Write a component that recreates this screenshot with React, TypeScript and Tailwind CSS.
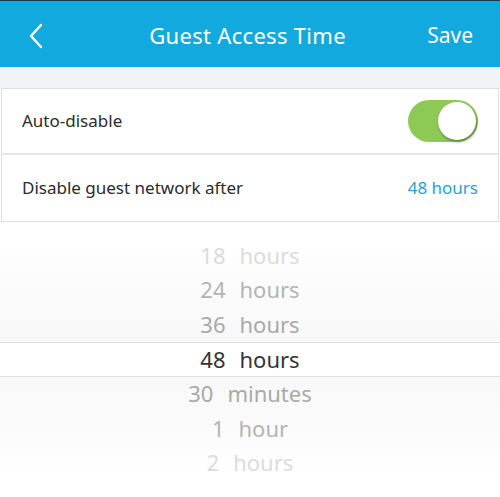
const items = [
  { n: '18', u: 'hours', c: 'text-[#dcdcdc]' },
  { n: '24', u: 'hours', c: 'text-[#b4b4b4]' },
  { n: '36', u: 'hours', c: 'text-[#a9a9a9]' },
  { n: '48', u: 'hours', c: 'text-[#333333]', sel: true },
  { n: '30', u: 'minutes', c: 'text-[#a9a9a9]' },
  { n: '1', u: 'hour', c: 'text-[#b4b4b4]' },
  { n: '2', u: 'hours', c: 'text-[#dcdcdc]' },
];

export default function App() {
  return (
    <div className="h-[497px] w-[500px] overflow-hidden bg-white font-['Noto_Sans',sans-serif]">
      {/* Header */}
      <div className="border-t border-[#1b3a48] bg-[#12aade]">
        <div className="flex h-[66px] items-center px-6 pt-[3px] text-white">
          <svg width="16" height="26" viewBox="0 0 16 26" className="ml-1">
            <path d="M13 2 L3 13 L13 24" fill="none" stroke="white" strokeWidth="2.4" strokeLinecap="round" strokeLinejoin="round" />
          </svg>
          <div className="flex-1 text-center text-[22px] tracking-[0.3px] pl-6">Guest Access Time</div>
          <div className="text-[21px] pr-[3px]">Save</div>
        </div>
      </div>
      <div className="h-[21px] bg-[#f1f4f7]" />

      {/* Settings card */}
      <div className="mx-[1px] border border-[#dedede] bg-white">
        <div className="flex h-[66px] items-center justify-between border-b-2 border-[#e6e6e6] pl-5 pr-[20px]">
          <span className="text-[17px] text-[#2b2b2b]">Auto-disable</span>
          <div className="flex h-[42px] w-[70px] items-center justify-end rounded-full bg-[#8ec955] pr-[2px]">
            <div className="h-[38px] w-[38px] rounded-full bg-white shadow-[1px_2px_3px_rgba(0,0,0,0.35)]" />
          </div>
        </div>
        <div className="flex h-[66px] items-center justify-between pl-5 pr-[20px]">
          <span className="text-[17px] text-[#2b2b2b]">Disable guest network after</span>
          <span className="text-[17px] text-[#27a3d4]">48 hours</span>
        </div>
      </div>

      {/* Picker */}
      <div className="mt-[15px] flex flex-col">
        <div className="bg-gradient-to-b from-[#ffffff] to-[#f8f8f8] pt-[1px]">
          {items.slice(0, 3).map((it) => (
            <Row key={it.n} {...it} />
          ))}
        </div>
        <div className="border-y border-[#e2e2e2] bg-white">
          <Row {...items[3]} />
        </div>
        <div className="bg-gradient-to-b from-[#f8f8f8] to-[#ffffff]">
          {items.slice(4).map((it) => (
            <Row key={it.n} {...it} />
          ))}
        </div>
      </div>
    </div>
  );
}

function Row({ n, u, c, sel }: { n: string; u: string; c: string; sel?: boolean }) {
  return (
    <div className={`flex items-center justify-center gap-[14px] text-[22px] ${c} ${sel ? 'h-[33px]' : 'h-[34.5px]'}`}>
      <span>{n}</span>
      <span>{u}</span>
    </div>
  );
}
